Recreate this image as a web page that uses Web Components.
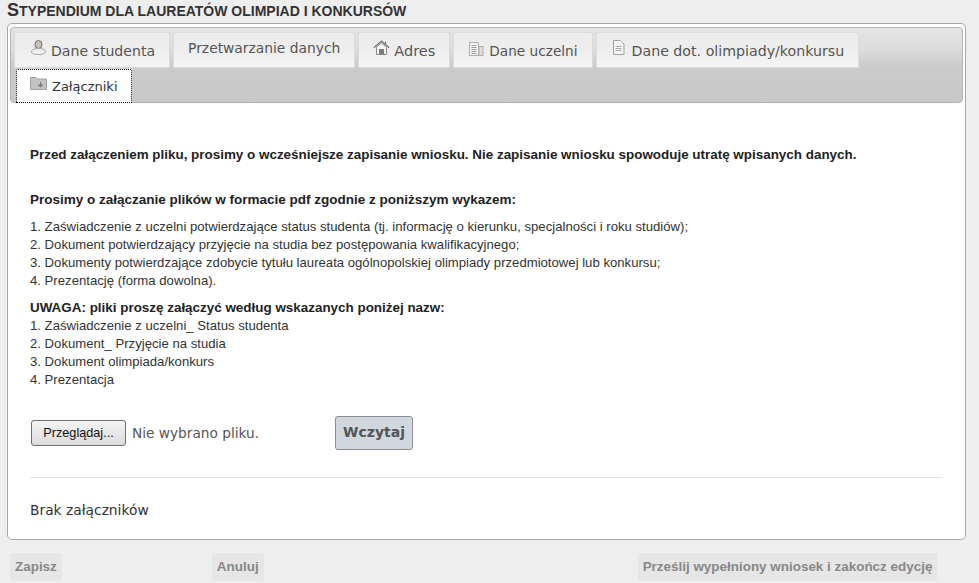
<!DOCTYPE html>
<html><head><meta charset="utf-8"><style>
html,body{margin:0;padding:0;background:#eee;overflow:hidden;height:583px}
body{font-family:"Liberation Sans",Arial,sans-serif}
</style></head><body>
<app-page></app-page>
<script>
const icons={
user:'<svg width="17" height="15" viewBox="0 0 17 15"><ellipse cx="8.500" cy="4.500" rx="3.500" ry="4" fill="#c8c4bc" stroke="#6f6b64"/><path d="M1.500 12c0-2.500 3-3.500 7-3.500s7 1 7 3.500c0 1.500-3 2.500-7 2.500s-7-1-7-2.500z" fill="#efefef" stroke="#a5a5a5"/></svg>',
home:'<svg width="17" height="15" viewBox="0 0 17 15"><path d="M.8 7.800 8.500 1.200 16.200 7.800M12.500 1.500v2.500" fill="none" stroke="#7a7a7a" stroke-width="1.300"/><path d="M3.500 7V14.500H13.500V7L8.500 3z" fill="#f4f4f4" stroke="#8c8c8c"/><rect x="6" y="9" width="5" height="5.500" fill="#7a7a7a"/></svg>',
doc2:'<svg width="15" height="15" viewBox="0 0 15 15" style="margin-top:2px"><rect x=".5" y=".5" width="9" height="13" fill="#f2f2f2" stroke="#b0b0b0"/><path d="M2.500 3.500h5M2.500 5.500h5M2.500 7.500h5M2.500 9.500h5M2.500 11.500h5" stroke="#a0a0a0"/><rect x="10" y="4.500" width="4" height="9" fill="#ddd" stroke="#b0b0b0"/></svg>',
doc:'<svg width="13" height="15" viewBox="0 0 13 15"><path d="M1.500.5H8.500L12 4V14.500H1.500z" fill="#f7f7f7" stroke="#a0a0a0"/><path d="M3.500 6.500h6M3.500 8.500h6M3.500 10.500h6" stroke="#aaa"/></svg>',
folder:'<svg width="17" height="13" viewBox="0 0 17 13"><path d="M.5 12.500V.5H6L7.500 2H16.500V12.500z" fill="#c4c4c4" stroke="#a0a0a0"/><path d="M11 5v2.500h2.500L10.500 10.500 7.500 7.500H10V5z" fill="#777"/></svg>'};
class AppTab extends HTMLElement{
 connectedCallback(){
  const on=this.hasAttribute('active'),ic=this.getAttribute('icon'),pad=this.getAttribute('pad')||'14',off=this.getAttribute('off')||(ic?'7':'2'),g=this.getAttribute('gap')||'5',fs=this.getAttribute('fs')||'14.1';
  this.attachShadow({mode:'open'}).innerHTML=`<style>
  :host{display:flex;align-items:flex-start;height:34px;box-sizing:border-box;padding:${off}px 14px 0 ${pad}px;
   background:${on?'#fff':'linear-gradient(#ededed,#eeeeee 50%,#f4f4f4)'};
   ${on?'outline:1px dotted #111;outline-offset:-1px;margin-left:1px;':''}
   border-radius:2px 2px 0 0;font:${fs}px "DejaVu Sans",sans-serif;color:${on?'#333':'#555'};white-space:nowrap;box-shadow:${on?'none':'0 0 0 1px #dcdcdc'}}
  svg{display:block;margin-right:${g}px;flex:none}.l{padding-top:${on?1:ic?3:5}px;line-height:17px}
  </style>${ic?icons[ic]:''}<span class="l"><slot></slot></span>`;
 }}
customElements.define('app-tab',AppTab);
class AppBtn extends HTMLElement{connectedCallback(){this.attachShadow({mode:'open'}).innerHTML=`<style>
 :host{display:block;height:28px;box-sizing:border-box;padding:0 5px;background:#e6e6e6;border-radius:3px;font:bold 13.450px/28px "Liberation Sans",sans-serif;color:#888;white-space:nowrap}
 </style><slot></slot>`}}
customElements.define('app-btn',AppBtn);
class AppPage extends HTMLElement{connectedCallback(){this.attachShadow({mode:'open'}).innerHTML=`<style>
 :host{display:block;width:979px;height:583px;overflow:hidden;color:#222;font:13.150px/18px "Liberation Sans",Arial,sans-serif}
 h1{margin:0;padding:0 0 0 7px;font:bold 14px/20px "Liberation Sans",sans-serif;text-transform:uppercase;color:#333;height:23px}
 h1 b{font-size:18px}
 .panel{margin:0 13px 0 7px;height:517px;box-sizing:border-box;border:1px solid #a8a8a8;border-radius:5px;background:#fff;padding:3px 2px 0}
 .tabs{height:76px;box-sizing:border-box;background:linear-gradient(#e4e4e4,#dcdcdc 30%,#cbcbcb 52%,#c8c8c8);border:1px solid #b4b4b4;border-radius:4px;display:flex;flex-wrap:wrap;align-content:flex-start;gap:2px 5px;padding:5px 0 0 4px}
 .body{padding:0 20px}
 .b{font-weight:bold;font-size:13.430px;color:#222}
 .warn{margin-top:43px;height:18px}
 .lead{margin-top:27px;height:18px;margin-bottom:9px;font-size:13.500px}
 .plain div{height:18px;color:#333}
 .uw{margin-top:9px;height:18px}
 .file{display:flex;align-items:center;margin-top:27px;height:34px;font:13.700px "DejaVu Sans",sans-serif;color:#555}
 .pick{width:95px;height:26px;box-sizing:border-box;border:1px solid #707070;border-radius:3px;background:linear-gradient(#f4f4f4,#dcdcdc);font:12.700px/24px "Liberation Sans",sans-serif;color:#111;text-align:center;margin:0 6px 0 1px}
 .none{width:203px}
 .up{width:78px;height:34px;box-sizing:border-box;border:1px solid #8b8f92;border-radius:3px;background:#d0d8de;font:bold 14px/30px "DejaVu Sans",sans-serif;color:#555;text-align:center}
 hr{border:0;border-top:1px solid #e2e2e2;margin:27px 0 0;width:913px}
 .no{margin:23px 0 0 0;font:13.800px/18px "DejaVu Sans",sans-serif;color:#333}
 .foot{display:flex;padding:13px 0 0 10px}
 </style>
 <h1><b>S</b>typendium dla laureatów olimpiad i konkursów</h1>
 <section class="panel">
  <nav class="tabs">
   <app-tab icon="user" pad="15" gap="4">Dane studenta</app-tab><app-tab fs="13.83">Przetwarzanie danych</app-tab><app-tab icon="home" gap="4" fs="14.5">Adres</app-tab><app-tab icon="doc2" pad="15" fs="13.65">Dane uczelni</app-tab><app-tab icon="doc" pad="15" gap="7" fs="14.2">Dane dot. olimpiady/konkursu</app-tab><app-tab icon="folder" active off="8" fs="13">Załączniki</app-tab>
  </nav>
  <div class="body">
   <div class="warn b">Przed załączeniem pliku, prosimy o wcześniejsze zapisanie wniosku. Nie zapisanie wniosku spowoduje utratę wpisanych danych.</div>
   <div class="lead b">Prosimy o załączanie plików w formacie pdf zgodnie z poniższym wykazem:</div>
   <div class="plain"><div>1. Zaświadczenie z uczelni potwierdzające status studenta (tj. informację o kierunku, specjalności i roku studiów);</div><div>2. Dokument potwierdzający przyjęcie na studia bez postępowania kwalifikacyjnego;</div><div>3. Dokumenty potwierdzające zdobycie tytułu laureata ogólnopolskiej olimpiady przedmiotowej lub konkursu;</div><div>4. Prezentację (forma dowolna).</div></div>
   <div class="uw b">UWAGA: pliki proszę załączyć według wskazanych poniżej nazw:</div>
   <div class="plain"><div>1. Zaświadczenie z uczelni_ Status studenta</div><div>2. Dokument_ Przyjęcie na studia</div><div>3. Dokument olimpiada/konkurs</div><div>4. Prezentacja</div></div>
   <div class="file"><div class="pick">Przeglądaj...</div><div class="none">Nie wybrano pliku.</div><div class="up">Wczytaj</div></div>
   <hr>
   <div class="no">Brak załączników</div>
  </div>
 </section>
 <div class="foot"><app-btn style="margin-right:150px">Zapisz</app-btn><app-btn style="margin-right:374px">Anuluj</app-btn><app-btn>Prześlij wypełniony wniosek i zakończ edycję</app-btn></div>`}}
customElements.define('app-page',AppPage);
</script></body></html>
